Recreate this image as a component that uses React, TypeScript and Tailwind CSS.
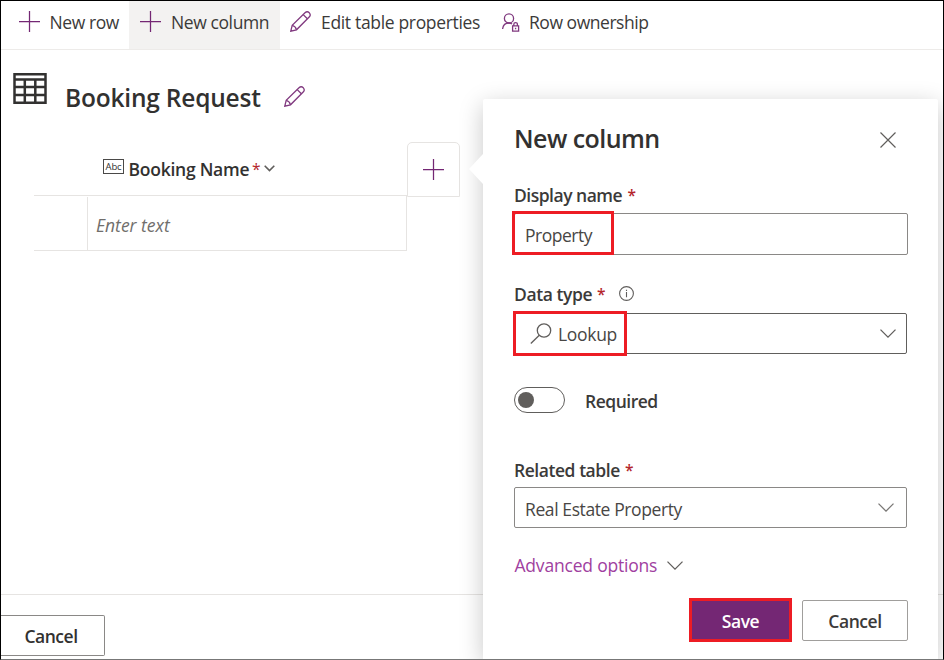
import type { ReactNode } from 'react';

const PURPLE = '#742774';

function Plus({ className }: { className: string }) {
  return (
    <svg className={className} viewBox="0 0 21 21" width="21" height="21" fill="none" stroke={PURPLE} strokeWidth="1.25">
      <path d="M0 10.5H21M10.5 0V21" />
    </svg>
  );
}

function Pencil({ className }: { className: string }) {
  return (
    <svg className={className} viewBox="0 0 21 21" width="21" height="21" fill="none" stroke="#80397f" strokeWidth="1.3">
      <path d="M.8 20.2 2.2 14.4 15 1.8Q17.2-.2 19.3 1.8 21.2 4 19.2 6L6.5 18.8Z" />
      <path d="M2.2 14.4Q5.6 15.2 6.5 18.8M13.2 3.6 17.4 7.8" />
    </svg>
  );
}

function PersonLock() {
  return (
    <svg className="shrink-0" viewBox="0 0 18 19" width="18" height="19" fill="none" stroke="#80397f" strokeWidth="1.3">
      <circle cx="7" cy="5.4" r="4.6" />
      <path d="M.6 16C1 12.5 3.4 10 7 10 8.3 10 9.3 10.4 10 11" />
      <path d="M10.6 12.9H16.6V18.2H10.6ZM11.8 12.9V11.4Q11.8 9.6 13.6 9.6T15.4 11.4V12.9M13.6 14.7V16.3" />
    </svg>
  );
}

function Chevron({ className, stroke = '#605e5c' }: { className: string; stroke?: string }) {
  return (
    <svg className={className} viewBox="0 0 16 9" fill="none" stroke={stroke} strokeWidth="1.3">
      <path d="M.5 .6 8 8.1 15.5 .6" />
    </svg>
  );
}

function Label({ children, width, className }: { children: ReactNode; width: string; className: string }) {
  return (
    <div className={`flex h-6 items-center font-[540] text-[#3b3a39] ${className}`}>
      <span className={`${width} shrink-0`}>{children}</span>
      <span className="text-[15.5px] text-[#b4262c]">*</span>
    </div>
  );
}

function Toolbar() {
  return (
    <div className="flex h-[49px] shrink-0 items-start border-b border-[#edebe9] text-[#3b3a39]">
      <div className="flex h-12 w-32 items-start pl-[18px]">
        <Plus className="mt-[10px] shrink-0" />
        <span className="mt-[9px] ml-[9.5px] tracking-[-0.42px]">New row</span>
      </div>
      <div className="flex h-12 w-[151px] items-start bg-[#f3f2f1] pl-[11px]">
        <Plus className="mt-[10px] shrink-0" />
        <span className="mt-[9px] ml-[10px] tracking-[-0.4px]">New column</span>
      </div>
      <div className="flex w-[222px] items-start pl-[10px]">
        <Pencil className="mt-[10px] shrink-0" />
        <span className="mt-[9px] ml-[10px] tracking-[-0.33px]">Edit table properties</span>
      </div>
      <div className="flex items-start">
        <div className="mt-[12px]"><PersonLock /></div>
        <span className="mt-[9px] ml-[9px] tracking-[-0.46px]">Row ownership</span>
      </div>
    </div>
  );
}

function TableGrid() {
  return (
    <div className="ml-[33px] flex w-[425px] items-start">
      <div className="w-[373px] shrink-0">
        <div className="flex h-[54px] items-start border-b border-[#e6e4e2] pl-[69px]">
          <div className="mt-[17px] flex h-[15px] w-[21px] shrink-0 items-center justify-center border-[1.5px] border-[#4a4948] text-[9.5px] leading-none font-medium tracking-[-0.2px] text-[#323130]">
            Abc
          </div>
          <span className="mt-[15px] ml-[4.5px] w-[123.5px] shrink-0 font-[540] tracking-[-0.25px] text-[#323130]">Booking Name</span>
          <span className="mt-[15px] w-[12px] shrink-0 text-[15.5px] text-[#b4262c]">*</span>
          <svg className="mt-[23px] shrink-0" width="11" height="7" viewBox="0 0 11 7" fill="none" stroke="#605e5c" strokeWidth="1.6">
            <path d="M.7 .8 5.5 5.6 10.3 .8" />
          </svg>
        </div>
        <div className="flex h-[55px] border-r border-b border-[#e6e4e2]">
          <div className="mt-px w-[54px] border-r border-[#e6e4e2]" />
          <span className="mt-[17px] ml-2 text-[#706e6c] italic">Enter text</span>
        </div>
      </div>
      <div className="flex h-[55px] w-[53px] shrink-0 items-center justify-center rounded-t-[5px] border border-[#e6e4e2]">
        <Plus className="shrink-0" />
      </div>
    </div>
  );
}

function ColumnPanel() {
  return (
    <div className="absolute top-[98px] left-[482px] h-[560px] w-[455px] rounded-t-[2px] bg-white pl-[31px] shadow-[0_6px_24px_rgba(0,0,0,0.22)]">
      <div className="absolute top-[55px] left-[-14px] h-[30px] w-[14px] bg-white [clip-path:polygon(100%_0,0_50%,100%_100%)]" />
      <div className="flex h-[80px] items-start">
        <h2 className="mt-[23px] w-[366px] text-[25px] leading-8 font-[570] tracking-[-0.55px] text-[#323130]">New column</h2>
        <svg className="mt-[33px]" width="16" height="16" viewBox="0 0 16 16" fill="none" stroke="#605e5c" strokeWidth="1.2">
          <path d="M.5 .5 15.5 15.5M15.5 .5 .5 15.5" />
        </svg>
      </div>
      <Label width="w-[113.5px]" className="mt-[4px] tracking-[-0.5px]">Display name</Label>
      <div className="relative mt-[6px] flex h-[42px] w-[394px] items-center rounded-[2px] border border-[#8a8886] pl-[10px] text-[#484644]">
        <span className="mt-[2px] tracking-[-0.5px]">Property</span>
        <div className="absolute top-[-3px] left-[-3px] h-[44px] w-[102px] border-[3px] border-[#ed1c24]" />
      </div>
      <div className="mt-[27px] flex h-6 items-center">
        <Label width="w-[83px]" className="w-[105px] tracking-[-0.42px]">Data type</Label>
        <svg className="mb-[2px]" width="15" height="15" viewBox="0 0 15 15" fill="none" stroke="#605e5c" strokeWidth="1.1">
          <circle cx="7.5" cy="7.5" r="6.9" />
          <path d="M7.5 6V11.2M7.5 3.8V5" />
        </svg>
      </div>
      <div className="relative mt-[7px] flex h-[41px] w-[393px] items-center rounded-[2px] border border-[#605e5c] text-[#484644]">
        <svg className="ml-[14.5px] shrink-0" width="22" height="21" viewBox="0 0 22 21" fill="none" stroke="#605e5c" strokeWidth="1.3">
          <circle cx="14" cy="7.5" r="6.7" />
          <path d="M9.3 12.2.8 20.5" />
        </svg>
        <span className="mt-[1px] ml-[6.5px] w-[323px] shrink-0 tracking-[-0.3px]">Lookup</span>
        <Chevron className="mr-auto ml-[-1px] h-[9px] w-4 shrink-0" />
        <div className="absolute top-[-3px] left-[-2px] h-[45px] w-[114px] border-[3px] border-[#ed1c24]" />
      </div>
      <div className="mt-[33px] flex h-[26px] items-center">
        <div className="flex h-[26px] w-[51px] items-center rounded-full border border-[#605e5c] pl-[3px]">
          <div className="h-4 w-4 rounded-full bg-[#605e5c]" />
        </div>
        <span className="mt-[2px] ml-[20px] font-[540] tracking-[-0.5px] text-[#3b3a39]">Required</span>
      </div>
      <Label width="w-[111px]" className="mt-[45px] tracking-[-0.45px]">Related table</Label>
      <div className="mt-[5px] flex h-[41px] w-[393px] items-center rounded-[2px] border border-[#8a8886] pl-[10px] text-[#484644]">
        <span className="mt-[2px] w-[353px] tracking-[-0.4px]">Real Estate Property</span>
        <Chevron className="h-[9px] w-4 shrink-0" stroke="#7a7876" />
      </div>
      <div className="mt-[25px] flex h-6 items-center text-[#a040a0]">
        <span className="w-[153px] pl-[0.5px] tracking-[-0.2px]">Advanced options</span>
        <Chevron className="h-[9px] w-4" />
      </div>
      <div className="mt-[21px] ml-[175px] flex items-start gap-[10px] font-[540]">
        <div className="flex h-[44px] w-[103px] items-center justify-center border-[3px] border-[#ed1c24] bg-[#742774] pt-[2px] font-semibold tracking-[-0.4px] text-white">Save</div>
        <div className="mt-[2px] flex h-[41px] w-[106px] items-center justify-center rounded-[2px] border border-[#a09e9c] pt-px tracking-[-0.45px] text-[#3b3a39]">Cancel</div>
      </div>
    </div>
  );
}

export default function App() {
  return (
    <div className="relative flex h-[660px] w-[944px] flex-col overflow-hidden border border-black border-b-[#777] bg-white font-['Open_Sans','Noto_Sans',sans-serif] text-[17.5px] leading-6">
      <Toolbar />
      <div className="flex h-[92px] shrink-0 items-start pl-3">
        <svg className="mt-[23px] shrink-0" width="34" height="31" viewBox="0 0 34 31" fill="none" stroke="#323130" strokeWidth="2.5">
          <path d="M1.5 1.3H32.5V29.7H1.5ZM1.5 6.5H32.5M1.5 14H32.5M1.5 22H32.5M11.8 6.5V29.7M22.3 6.5V29.7" />
        </svg>
        <h1 className="mt-[32px] ml-[18px] w-[219px] shrink-0 text-[24.5px] leading-8 font-[570] tracking-[-0.2px] text-[#323130]">Booking Request</h1>
        <Pencil className="mt-[36px] shrink-0" />
      </div>
      <TableGrid />
      <div className="mt-auto h-[65px] shrink-0 border-t border-[#e6e4e2] pt-[20px]">
        <div className="flex h-[41px] w-[104px] items-center rounded-r-[2px] border border-l-0 border-[#8a8886] pt-px pl-[23.5px] font-[540] tracking-[-0.5px] text-[#323130]">Cancel</div>
      </div>
      <ColumnPanel />
    </div>
  );
}
